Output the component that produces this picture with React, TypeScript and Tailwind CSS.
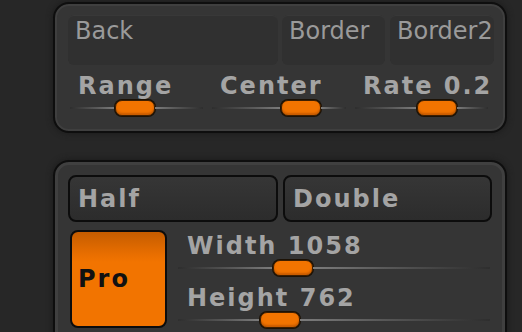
const FONT = { fontFamily: '"DejaVu Sans", "Liberation Sans", sans-serif' };

function Slider({
  label,
  thumbLeft,
  width,
  labelPad = 'pl-2',
}: {
  label: string;
  thumbLeft: number;
  width: string;
  labelPad?: string;
}) {
  return (
    <div className={`flex flex-col ${width}`}>
      <div className={`h-6 text-[24px] leading-none font-bold tracking-[2px] text-[#a4a4a4] whitespace-nowrap ${labelPad}`}>
        {label}
      </div>
      <div className="flex items-center h-4 mt-[2px]">
        <div
          className="h-[2px] bg-[linear-gradient(to_right,#2e2e2e,#5a5a5a_60%,#7c7c7c)]"
          style={{ width: thumbLeft }}
        />
        <div className="w-10 h-4 shrink-0 rounded-[7px] bg-[#f27400] border border-[#3d1e00] shadow-[0_0_0_1px_#1c1206,inset_0_-2px_2px_#c85c00]" />
        <div className="flex-1 h-[2px] bg-[linear-gradient(to_right,#7c7c7c,#5a5a5a_40%,#2e2e2e)]" />
      </div>
    </div>
  );
}

function FlatBox({ label, width }: { label: string; width: string }) {
  return (
    <div className={`${width} h-[50px] rounded-[6px] bg-[#303030] shadow-[inset_0_1px_0_#383838] pl-[7px] pt-[4px]`}>
      <div className="text-[24px] leading-none text-[#9a9a9a] whitespace-nowrap">{label}</div>
    </div>
  );
}

function DarkButton({ label, width }: { label: string; width: string }) {
  return (
    <div className={`${width} h-[47px] rounded-[8px] border-2 border-[#0c0c0c] bg-[linear-gradient(to_bottom,#363636,#2c2c2c)] flex items-center pl-2`}>
      <div className="text-[24px] leading-none font-bold tracking-[2px] text-[#a4a4a4]">{label}</div>
    </div>
  );
}

export default function App() {
  return (
    <div className="w-[522px] h-[332px] overflow-hidden bg-[#272727] pl-[53px] pt-[2px]" style={FONT}>
      {/* top panel */}
      <div className="w-[454px] rounded-[16px] border-2 border-[#0e0e0e] bg-[#353535] shadow-[inset_0_0_0_2px_#3f3f3f,0_0_6px_#1a1a1a] pt-[11px] pb-[15px]">
        <div className="flex pl-[13px]">
          <FlatBox label="Back" width="w-[210px]" />
          <div className="w-1" />
          <FlatBox label="Border" width="w-[103px]" />
          <div className="w-[5px]" />
          <FlatBox label="Border2" width="w-[104px]" />
        </div>
        <div className="flex gap-[9px] pl-[15px] mt-[9px]">
          <Slider label="Range" thumbLeft={45} width="w-[133px]" />
          <Slider label="Center" thumbLeft={69} width="w-[134px]" />
          <Slider label="Rate 0.2" thumbLeft={62} width="w-[133px]" />
        </div>
      </div>

      {/* bottom panel */}
      <div className="mt-[27px] w-[454px] h-[220px] rounded-[16px] border-2 border-[#0e0e0e] bg-[#353535] shadow-[inset_0_0_0_3px_#404040,0_0_6px_#1a1a1a] pt-[13px] pl-[13px]">
        <div className="flex gap-[5px]">
          <DarkButton label="Half" width="w-[210px]" />
          <DarkButton label="Double" width="w-[209px]" />
        </div>
        <div className="flex mt-2 ml-[2px]">
          <div className="w-[97px] h-[98px] shrink-0 rounded-[8px] border-2 border-[#0c0c0c] bg-[linear-gradient(to_bottom,#c45c00_0px,#d86600_12px,#e86e00_22px,#f27400_30px,#f27400_100%)] flex items-center pl-[6px]">
            <div className="text-[24px] leading-none font-bold tracking-[2px] text-[#111]">Pro</div>
          </div>
          <div className="flex flex-col ml-[11px] pt-1 gap-[10px]">
            <Slider label="Width 1058" thumbLeft={95} width="w-[312px]" labelPad="pl-[9px]" />
            <Slider label="Height 762" thumbLeft={82} width="w-[312px]" labelPad="pl-[9px]" />
          </div>
        </div>
      </div>
    </div>
  );
}
